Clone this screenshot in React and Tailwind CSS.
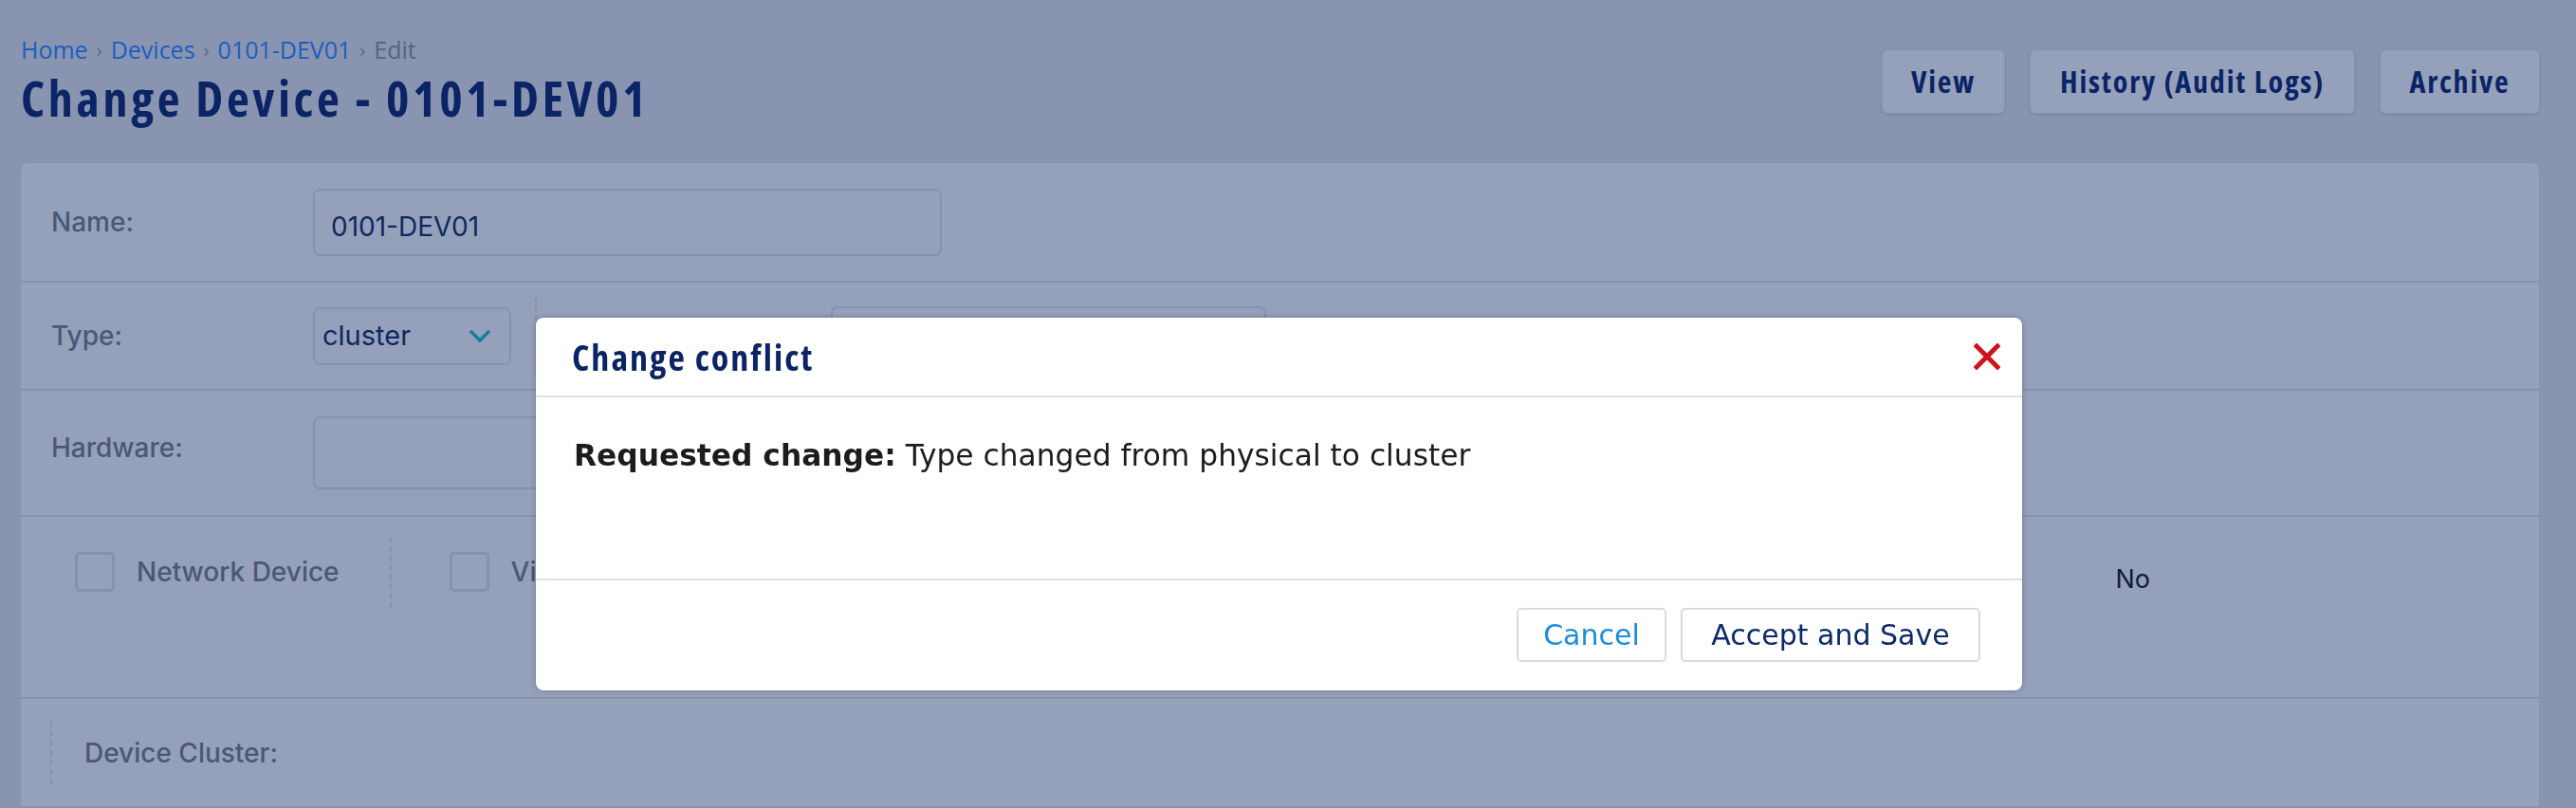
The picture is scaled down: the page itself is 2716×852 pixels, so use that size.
import React from 'react';

// condensed bold face for headings and header buttons
const cond = { fontFamily: '"Open Sans", "Liberation Sans", sans-serif', fontStretch: '75%' };
const crumbFont = { fontFamily: '"Open Sans", "Liberation Sans", sans-serif' };
const dejavu = { fontFamily: '"DejaVu Sans", Verdana, sans-serif' };

function Breadcrumb() {
  return (
    <div className="flex items-center gap-[9px] text-[25px] leading-none" style={crumbFont}>
      <span className="text-[#1b5ec0]">Home</span>
      <span className="text-[#55647f] text-[20px]">›</span>
      <span className="text-[#1b5ec0]">Devices</span>
      <span className="text-[#55647f] text-[20px]">›</span>
      <span className="text-[#1b5ec0]">0101-DEV01</span>
      <span className="text-[#55647f] text-[20px]">›</span>
      <span className="text-[#55647f]">Edit</span>
    </div>
  );
}

function HeaderButton({ children, w }) {
  return (
    <button
      className={`h-[68px] ${w} rounded-[6px] border border-[#8592ae] bg-[#95a1bb] text-[32px] font-bold tracking-[1.8px] text-[#0b2466] shadow-sm`}
      style={cond}
    >
      {children}
    </button>
  );
}

function Row({ children, className = '' }) {
  return <div className={`flex border-b-2 border-[#8592ae] ${className}`}>{children}</div>;
}

function Label({ children, className = '' }) {
  return <div className={`w-[276px] shrink-0 text-[28px] font-medium text-[#4a5878] ${className}`}>{children}</div>;
}

function Checkbox() {
  return <div className="h-[42px] w-[42px] shrink-0 rounded-[5px] border-[3px] border-[#8592ae]" />;
}

function ConflictModal() {
  return (
    <div className="fixed left-[565px] top-[335px] w-[1567px] rounded-[8px] bg-white shadow-[0_0_6px_rgba(0,0,0,0.25)]">
      <div className="flex h-[84px] items-center justify-between border-b-[2px] border-[#dde1e6] pl-[38px] pr-[23px]">
        <h2 className="text-[38px] font-bold tracking-[2px] text-[#0b2466]" style={cond}>Change conflict</h2>
        <svg width="28" height="28" viewBox="0 0 28 28" className="mb-[1px]">
          <path d="M3 3 L25 25 M25 3 L3 25" stroke="#d0131b" strokeWidth="5" strokeLinecap="square" />
        </svg>
      </div>
      <div className="h-[193px] border-b-[2px] border-[#dde1e6] pl-[40px] pt-[38px] text-[31.3px] text-[#1c1c1c]" style={dejavu}>
        <span className="font-bold">Requested change:</span> Type changed from physical to cluster
      </div>
      <div className="flex h-[116px] items-center justify-end gap-[15px] pr-[44px] pb-[2px] text-[30px]" style={dejavu}>
        <button className="h-[57px] w-[158px] rounded-[5px] border-[2px] border-[#d8dce0] text-[#1b8fd8]">Cancel</button>
        <button className="h-[57px] w-[316px] rounded-[5px] border-[2px] border-[#d8dce0] text-[#0d2a6b]">Accept and Save</button>
      </div>
    </div>
  );
}

export default function App() {
  return (
    <div className="relative h-[852px] w-full overflow-hidden bg-[#8994b1]" style={{ fontFamily: 'Inter, "Noto Sans", sans-serif' }}>
      <div className="flex justify-between pl-[22px] pr-[38px]">
        <div className="pt-[40px]">
          <Breadcrumb />
          <h1 className="mt-[12px] text-[52px] font-bold leading-none tracking-[3.7px] text-[#0b2466]" style={cond}>
            Change Device - 0101-DEV01
          </h1>
        </div>
        <div className="flex gap-[26px] pt-[52px]">
          <HeaderButton w="w-[130px]">View</HeaderButton>
          <HeaderButton w="w-[343px]">History (Audit Logs)</HeaderButton>
          <HeaderButton w="w-[169px]">Archive</HeaderButton>
        </div>
      </div>

      <div className="ml-[21px] mr-[38px] mt-[42px] rounded-t-[8px] border border-[#8592ae] bg-[#95a1bb]">
        <Row className="h-[126px] items-center pl-[32px]">
          <Label>Name:</Label>
          <div className="flex h-[71px] w-[663px] items-center rounded-[7px] border-[2px] border-[#8592ae] pl-[17px] pt-[10px] text-[28px] text-[#10285f]">
            0101-DEV01
          </div>
        </Row>

        <Row className="h-[114px] items-center pl-[32px]">
          <Label>Type:</Label>
          <div className="flex h-[61px] w-[209px] items-center justify-between rounded-[7px] border-[2px] border-[#8592ae] pl-[8px] pr-[18px] text-[29px] text-[#10285f]">
            cluster
            <svg width="26" height="16" viewBox="0 0 26 16">
              <path d="M3 3 L13 13 L23 3" fill="none" stroke="#167e9a" strokeWidth="3.5" />
            </svg>
          </div>
          <div className="ml-[25px] h-[82px] border-l-2 border-dashed border-[#8592ae]" />
          <div className="ml-[310px] h-[63px] w-[459px] rounded-[7px] border-[2px] border-[#8592ae]" />
        </Row>

        <Row className="h-[133px] items-center pl-[32px]">
          <Label className="mb-[12px]">Hardware:</Label>
          <div className="h-[77px] w-[700px] rounded-[7px] border-[2px] border-[#8592ae]" />
        </Row>

        <Row className="h-[192px] items-start pl-[57px] pt-[37px]">
          <div className="flex items-center gap-[23px]">
            <Checkbox />
            <span className="text-[28px] font-medium text-[#4a5878]">Network Device</span>
          </div>
          <div className="ml-[53px] mt-[-16px] h-[75px] border-l-2 border-dashed border-[#8592ae]" />
          <div className="ml-[61px] flex items-center gap-[23px]">
            <Checkbox />
            <span className="text-[28px] font-medium text-[#4a5878]">Virtual Machine</span>
          </div>
          <span className="ml-auto mr-[410px] pt-[9px] text-[27px] text-[#111a33]">No</span>
        </Row>

        <Row className="h-[115px] items-center pl-[31px]">
          <div className="h-[67px] border-l-2 border-dashed border-[#8592ae]" />
          <span className="ml-[34px] text-[28px] font-medium text-[#4a5878]">Device Cluster:</span>
        </Row>
      </div>

      <ConflictModal />
    </div>
  );
}
